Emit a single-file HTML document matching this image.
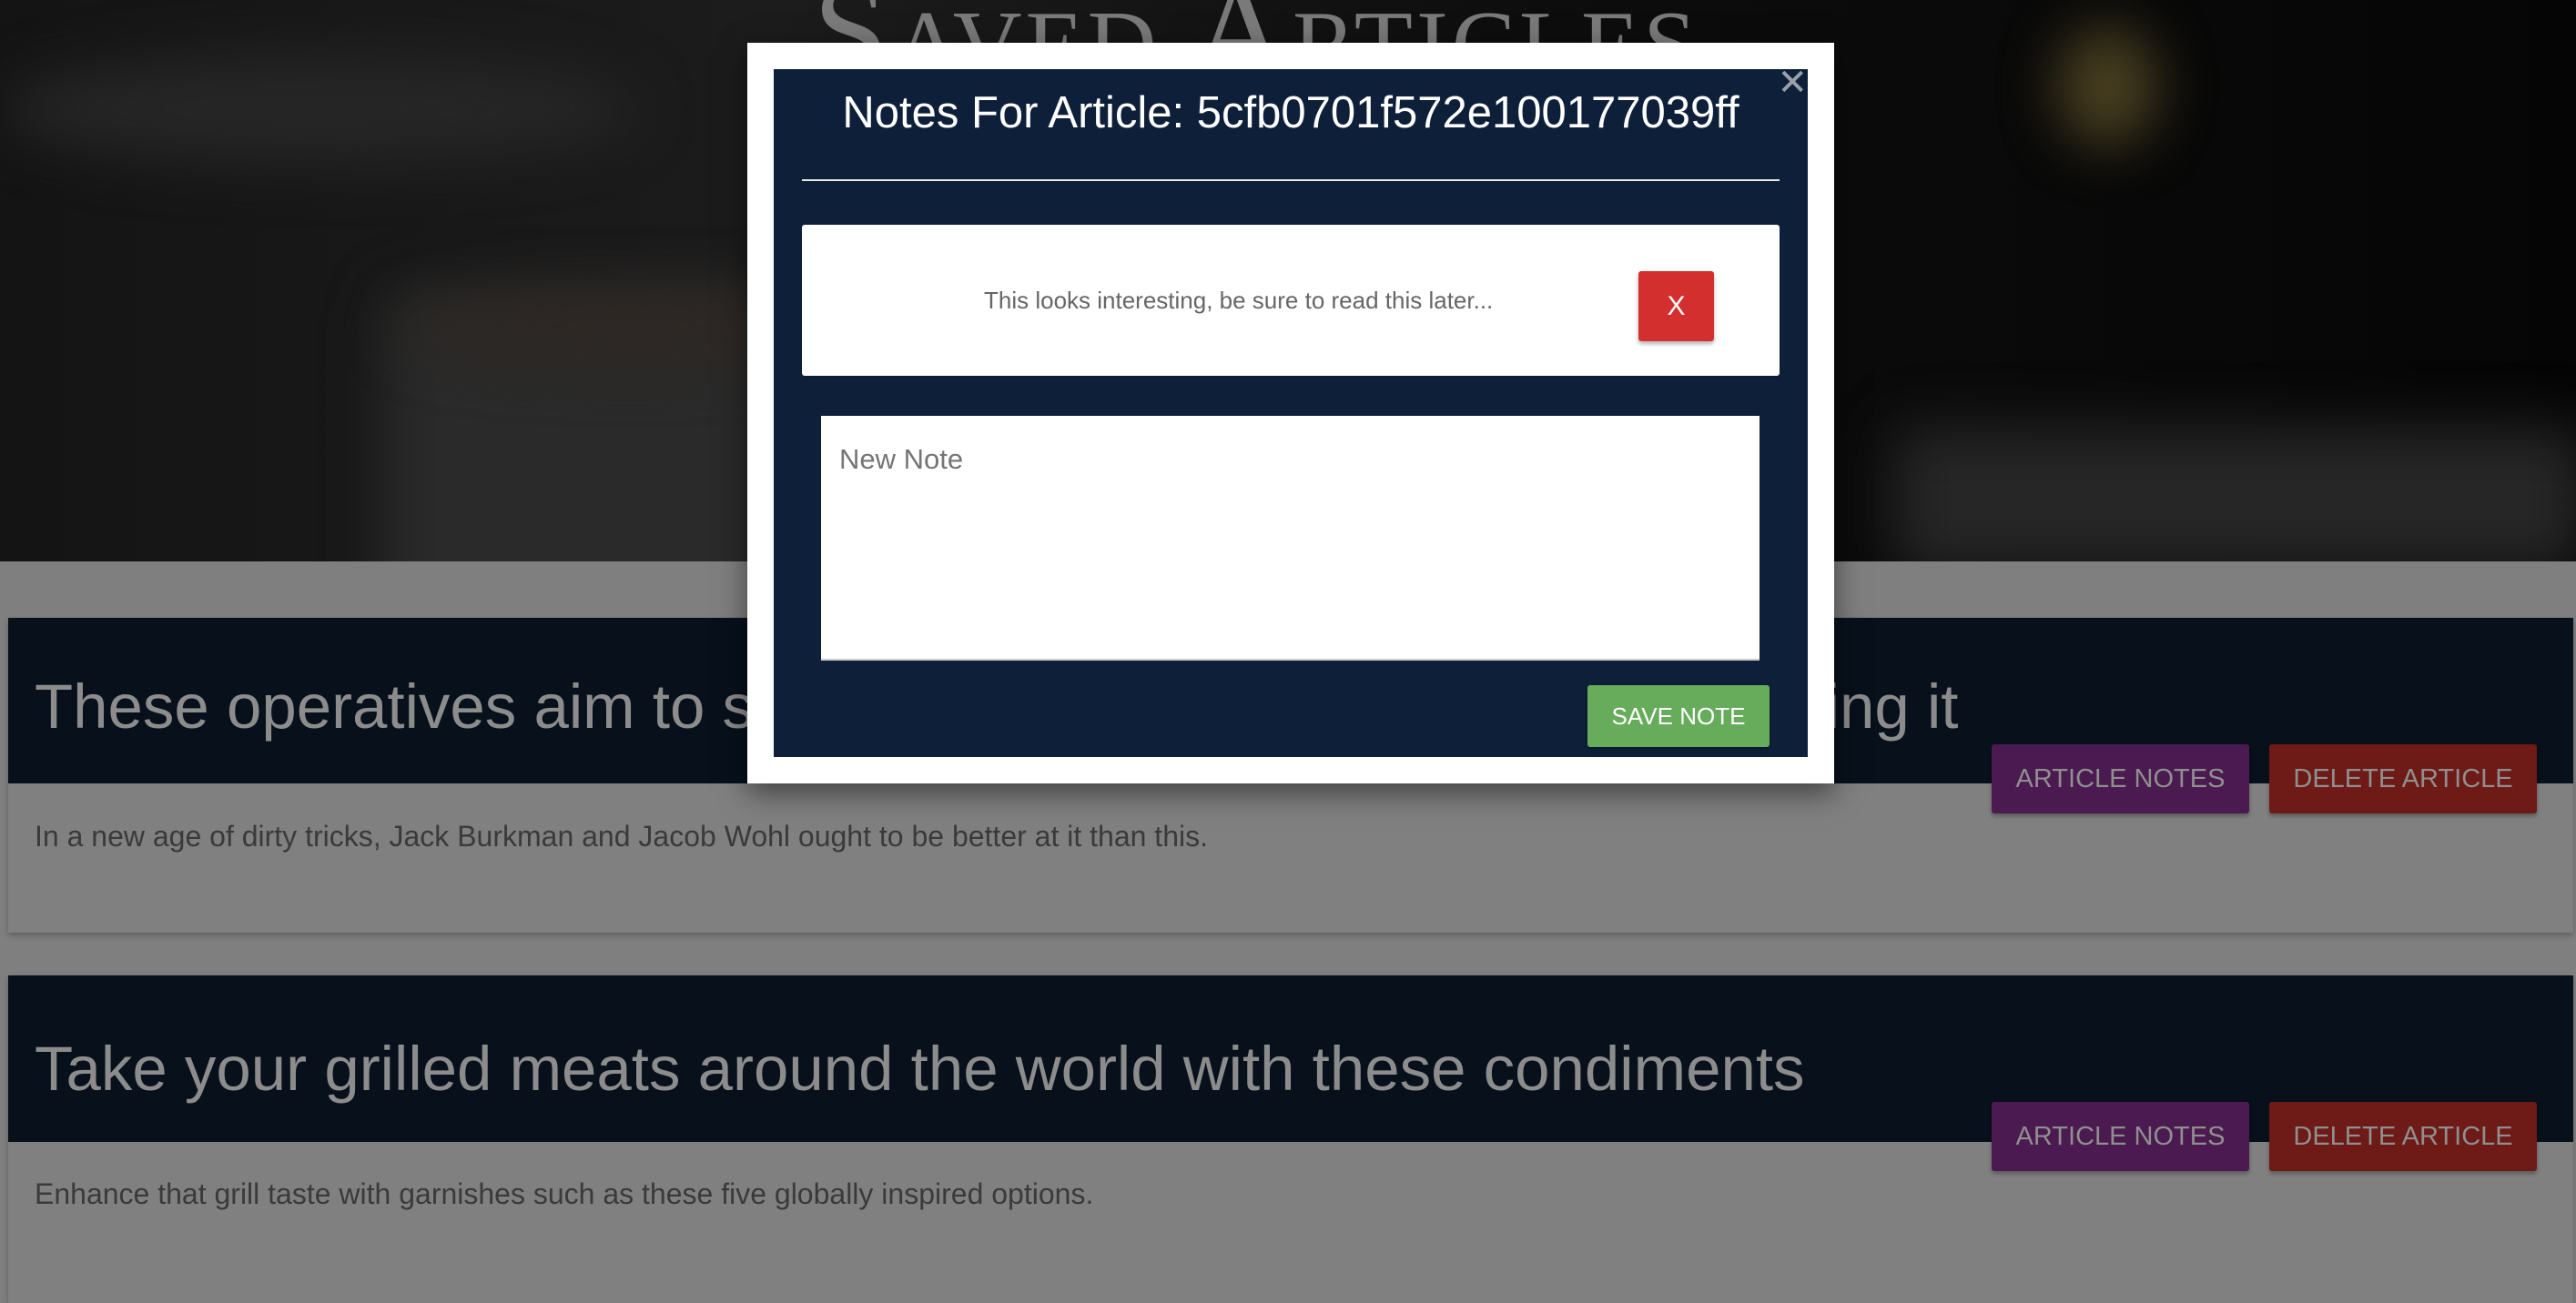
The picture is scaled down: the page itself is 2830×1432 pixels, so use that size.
<!DOCTYPE html>
<html><head><meta charset="utf-8"><style>
*{box-sizing:border-box;margin:0;padding:0}
body{width:2830px;height:1414px;overflow:hidden;background:#7f7f7f;font-family:"Liberation Sans",sans-serif;position:relative}
.hero{position:absolute;left:0;top:0;width:2830px;height:617px;background:linear-gradient(90deg,#141414 0%,#1c1c1c 30%,#0d0d0d 60%,#050505 100%);overflow:hidden}
.hero .b{position:absolute;border-radius:50%;filter:blur(30px)}
.saved{position:absolute;left:893px;top:-52px;font-family:"Liberation Serif",serif;font-size:150px;color:#7a7a7a;letter-spacing:4px;font-variant:small-caps;white-space:nowrap}
.card{position:absolute;left:9px;width:2818px;background:#808080;box-shadow:0 3px 6px rgba(0,0,0,.25)}
.card .h{background:#07101b;height:182px;position:relative}
.card .h .t{position:absolute;left:29px;font-size:69px;color:#8c8c8c;white-space:nowrap}
.card .d{position:absolute;left:29px;font-size:32px;color:#3a3a3a;white-space:nowrap}
.btn{position:absolute;height:76px;color:#8f8f8f;font-size:29px;display:flex;align-items:center;justify-content:center;border-radius:3px;box-shadow:0 3px 5px rgba(0,0,0,.3)}
.modal{position:absolute;left:821px;top:47px;width:1194px;height:814px;background:#fff;box-shadow:0 10px 30px rgba(0,0,0,.5)}
.inner{position:absolute;left:29px;top:29px;width:1136px;height:756px;background:#0e2039}
</style></head><body>
<div class="hero">
<div class="b" style="left:420px;top:320px;width:520px;height:420px;background:#2a2a2a;border-radius:40px"></div>
<div class="b" style="left:440px;top:320px;width:500px;height:80px;background:#2e2824"></div>
<div class="b" style="left:2080px;top:470px;width:760px;height:160px;background:#262626;border-radius:20px"></div>
<div class="b" style="left:2260px;top:30px;width:110px;height:130px;background:#4a4020"></div>
<div class="b" style="left:0;top:60px;width:700px;height:120px;background:#262626"></div>
</div>
<div class="saved">Saved Articles</div>

<div class="card" style="top:679px;height:346px">
<div class="h"><div class="t" style="top:58px">These operatives aim to sow chaos in 2020, but they keep bungling it</div></div>
<div class="d" style="top:222px">In a new age of dirty tricks, Jack Burkman and Jacob Wohl ought to be better at it than this.</div>
</div>
<div class="btn" style="left:2188px;top:818px;width:283px;background:#4a1a50">ARTICLE NOTES</div>
<div class="btn" style="left:2493px;top:818px;width:294px;background:#6e1a16">DELETE ARTICLE</div>

<div class="card" style="top:1072px;height:360px">
<div class="h" style="height:183px"><div class="t" style="top:63px">Take your grilled meats around the world with these condiments</div></div>
<div class="d" style="top:222px">Enhance that grill taste with garnishes such as these five globally inspired options.</div>
</div>
<div class="btn" style="left:2188px;top:1211px;width:283px;background:#4a1a50">ARTICLE NOTES</div>
<div class="btn" style="left:2493px;top:1211px;width:294px;background:#6e1a16">DELETE ARTICLE</div>

<div class="modal"><div class="inner">
<div style="position:absolute;left:0;right:0;top:20px;text-align:center;color:#fff;font-size:49px">Notes For Article: 5cfb0701f572e100177039ff</div>
<div style="position:absolute;right:0;top:-8px;color:#9aa0a8;font-size:40px">✕</div>
<div style="position:absolute;left:31px;top:121px;width:1074px;height:2px;background:#e6e6e6"></div>
<div style="position:absolute;left:31px;top:171px;width:1074px;height:166px;background:#fff;border-radius:3px;box-shadow:0 2px 3px rgba(0,0,0,.2)">
<div style="position:absolute;left:200px;top:68px;font-size:26px;color:#666">This looks interesting, be sure to read this later...</div>
<div style="position:absolute;left:919px;top:51px;width:83px;height:77px;background:#d32f2f;border-radius:3px;color:#fff;font-size:30px;display:flex;align-items:center;justify-content:center;box-shadow:0 3px 5px rgba(0,0,0,.3)">X</div>
</div>
<div style="position:absolute;left:52px;top:381px;width:1031px;height:269px;background:#fff;border-bottom:2px solid #ccc">
<div style="position:absolute;left:20px;top:30px;font-size:31px;color:#757575">New Note</div>
</div>
<div style="position:absolute;left:894px;top:677px;width:200px;height:68px;background:#66ac5b;border-radius:3px;color:#fff;font-size:26px;display:flex;align-items:center;justify-content:center;box-shadow:0 2px 4px rgba(0,0,0,.3)">SAVE NOTE</div>
</div></div>
</body></html>
